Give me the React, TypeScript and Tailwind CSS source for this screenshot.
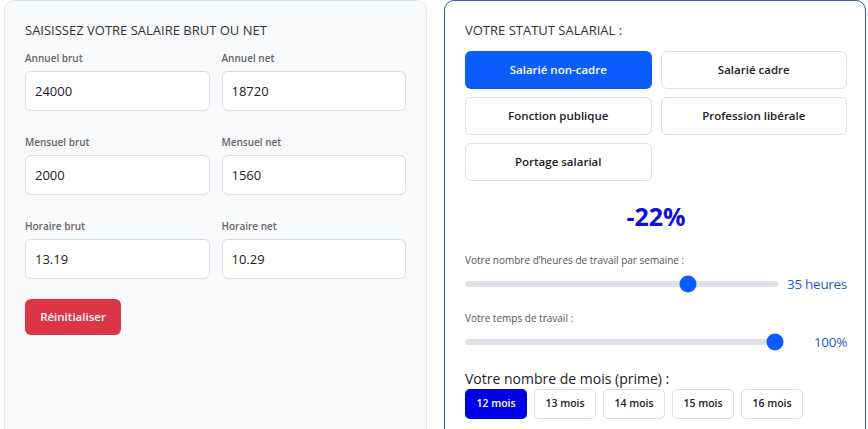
import React, { useState } from 'react';

const FONT = "font-['Open_Sans','Noto_Sans',sans-serif]";

const salaryFields = [
  { label: 'Annuel brut', value: '24000' },
  { label: 'Annuel net', value: '18720' },
  { label: 'Mensuel brut', value: '2000' },
  { label: 'Mensuel net', value: '1560' },
  { label: 'Horaire brut', value: '13.19' },
  { label: 'Horaire net', value: '10.29' },
];

const statuts = ['Salarié non-cadre', 'Salarié cadre', 'Fonction publique', 'Profession libérale', 'Portage salarial'];
const moisOptions = [12, 13, 14, 15, 16];

// Simple visual slider: grey track with a round thumb laid over it
const Slider: React.FC<{ offset: number; value: string }> = ({ offset, value }) => (
  <div className="flex items-center h-[20px]">
    <div className="relative w-[313px] h-[6px] rounded-full bg-[#dee2e6]">
      <div
        className="absolute top-1/2 w-[17px] h-[17px] -translate-x-1/2 -translate-y-1/2 rounded-full bg-[#0b5cff]"
        style={{ left: offset }}
      />
    </div>
    <div className="flex-1 text-right text-[13.5px] leading-[20px] tracking-[-0.3px] font-medium text-[#1a5ad8]">{value}</div>
  </div>
);

export default function App() {
  const [statut, setStatut] = useState(0);
  const [mois, setMois] = useState(12);

  return (
    <div className={`h-[429px] overflow-hidden bg-white flex gap-[17px] pl-[4px] ${FONT}`}>
      {/* Saisie du salaire */}
      <div className="w-[423px] shrink-0 h-[460px] rounded-[10px] border border-[#e3e6ea] bg-[#f8f9fa] px-[20px] pt-[20px]">
        <h2 className="text-[13px] leading-[18px] text-[#333]">SAISISSEZ VOTRE SALAIRE BRUT OU NET</h2>
        <div className="mt-[12px] grid grid-cols-2 gap-x-[12px] gap-y-[24px]">
          {salaryFields.map((f) => (
            <div key={f.label}>
              <div className="text-[10px] leading-[14px] font-semibold text-[#666]">{f.label}</div>
              <input
                defaultValue={f.value}
                className="mt-[6px] w-full h-[40px] rounded-[6px] border border-[#dcdfe3] bg-white pl-[9px] text-[13px] text-[#222] outline-none"
              />
            </div>
          ))}
        </div>
        <button className="mt-[20px] h-[36px] w-[96px] rounded-[6px] bg-[#dc3545] text-[11.5px] font-semibold text-white">
          Réinitialiser
        </button>
      </div>

      {/* Statut salarial */}
      <div className="w-[422px] shrink-0 h-[460px] rounded-[10px] border border-[#2d5fb4] bg-white pl-[20px] pr-[18px] pt-[20px]">
        <h2 className="text-[13px] leading-[18px] text-[#333]">VOTRE STATUT SALARIAL :</h2>
        <div className="mt-[12px] grid grid-cols-2 gap-x-[9px] gap-y-[8px]">
          {statuts.map((s, i) => (
            <button
              key={s}
              onClick={() => setStatut(i)}
              className={
                i === statut
                  ? 'h-[38px] rounded-[6px] bg-[#0b5cff] text-[11.5px] font-semibold text-white'
                  : 'h-[38px] rounded-[6px] border border-[#dcdfe3] bg-white text-[11.5px] font-semibold text-[#222]'
              }
            >
              {s}
            </button>
          ))}
        </div>

        <div className="mt-[19px] text-center text-[25px] leading-[32px] font-bold text-[#1010d8]">-22%</div>

        <div className="mt-[21px] text-[10px] leading-[14px] text-[#555]">Votre nombre d’heures de travail par semaine :</div>
        <div className="mt-[7px]">
          <Slider offset={223} value="35 heures" />
        </div>

        <div className="mt-[17px] text-[10px] leading-[14px] text-[#555]">Votre temps de travail :</div>
        <div className="mt-[7px]">
          <Slider offset={310} value="100%" />
        </div>

        <div className="mt-[18px] text-[14px] leading-[18px] text-[#222]">Votre nombre de mois (prime) :</div>
        <div className="mt-[1px] flex gap-[7px]">
          {moisOptions.map((m) => (
            <button
              key={m}
              onClick={() => setMois(m)}
              className={
                m === mois
                  ? 'h-[30px] w-[62px] rounded-[5px] bg-[#0000e6] text-[10.5px] font-semibold text-white'
                  : 'h-[30px] w-[62px] rounded-[5px] border border-[#dcdfe3] bg-white text-[10.5px] font-semibold text-[#222]'
              }
            >
              {m} mois
            </button>
          ))}
        </div>
      </div>
    </div>
  );
}
